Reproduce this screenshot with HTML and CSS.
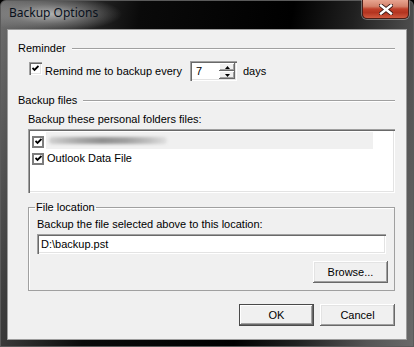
FILE: index.html
```html
<!DOCTYPE html>
<html>
<head>
<meta charset="utf-8">
<link rel="stylesheet" href="styles.css">
</head>
<body>
<div class="window">
  <div class="titlebar">
    <div class="title">Backup Options</div>
    <div class="close">
      <svg width="14" height="11" viewBox="0 0 14 11">
        <path d="M2 1.5 L12 9.5 M12 1.5 L2 9.5" stroke="#3a1a16" stroke-width="4.2" stroke-linecap="square"/>
        <path d="M2 1.5 L12 9.5 M12 1.5 L2 9.5" stroke="#ffffff" stroke-width="2.4" stroke-linecap="square"/>
      </svg>
    </div>
  </div>
  <div class="client">
    <div class="section-head"><span class="section-title">Reminder</span><span class="rule"></span></div>
    <div class="remind-row">
      <span class="check">
        <svg width="7" height="7" viewBox="0 0 7 7"><path d="M0.5 3 L2.5 5 L6.5 1" stroke="#000" stroke-width="1.8" fill="none"/></svg>
      </span>
      <span class="remind-label">Remind me to backup every</span>
      <div class="spin">
        <span class="spin-val">7</span>
        <div class="spin-btns">
          <div class="spin-btn"><svg width="5" height="3" viewBox="0 0 5 3"><path d="M2.5 0 L5 3 L0 3Z" fill="#000"/></svg></div>
          <div class="spin-btn"><svg width="5" height="3" viewBox="0 0 5 3"><path d="M0 0 L5 0 L2.5 3Z" fill="#000"/></svg></div>
        </div>
      </div>
      <span class="days">days</span>
    </div>
    <div class="section-head second"><span class="section-title">Backup files</span><span class="rule"></span></div>
    <div class="sub-label">Backup these personal folders files:</div>
    <div class="listbox">
      <div class="item">
        <span class="lcheck"><svg width="7" height="7" viewBox="0 0 7 7"><path d="M0.5 3 L2.5 5 L6.5 1" stroke="#000" stroke-width="1.8" fill="none"/></svg></span>
        <span class="item-text selected"><span class="smear"></span></span>
      </div>
      <div class="item">
        <span class="lcheck"><svg width="7" height="7" viewBox="0 0 7 7"><path d="M0.5 3 L2.5 5 L6.5 1" stroke="#000" stroke-width="1.8" fill="none"/></svg></span>
        <span class="item-text">Outlook Data File</span>
      </div>
    </div>
    <fieldset class="group">
      <legend>File location</legend>
      <div class="group-label">Backup the file selected above to this location:</div>
      <div class="textbox">D:\backup.pst</div>
      <div class="group-actions"><button class="btn">Browse...</button></div>
    </fieldset>
    <div class="dialog-actions">
      <button class="btn default">OK</button>
      <button class="btn">Cancel</button>
    </div>
  </div>
</div>
</body>
</html>
```

FILE: styles.css
```css
html, body {
  margin: 0;
  padding: 0;
  background: #000;
}

.window {
  width: 414px;
  height: 347px;
  box-sizing: border-box;
  display: flex;
  flex-direction: column;
  border-radius: 6px 6px 0 0;
  overflow: hidden;
  background:
    radial-gradient(ellipse 72px 18px at 50px 14px, rgba(185,185,185,0.95), rgba(150,150,150,0.5) 55%, rgba(120,120,120,0) 100%),
    linear-gradient(100deg, #707070 0%, #3c3c3c 12%, #0a0a0a 30%, #000 62%, #202020 75%, #555 90%, #6a6a6a 100%);
  box-shadow: inset 0 0 0 1px #5a5a5a;
}

.titlebar {
  height: 29px;
  display: flex;
  align-items: flex-start;
  padding-left: 9px;
  flex-shrink: 0;
}

.title {
  font-family: "Noto Sans", sans-serif;
  font-size: 12px;
  color: #08101c;
  margin-top: 5px;
  line-height: 16px;
}

.close {
  margin-left: auto;
  margin-right: 5px;
  width: 47px;
  height: 19px;
  box-sizing: border-box;
  border: 1px solid #4a1d16;
  border-top: none;
  border-radius: 0 0 5px 5px;
  background: linear-gradient(#e7a591 0%, #d4826b 35%, #c0402a 50%, #b33420 70%, #d05a40 100%);
  box-shadow: 0 0 0 1px rgba(200,200,200,0.45);
  display: flex;
  align-items: center;
  justify-content: center;
}

.client {
  flex: 1;
  margin: 0 7px 7px 7px;
  border: 1px solid #9c9c9c;
  background: #f0f0f0;
  padding: 12px 11px 0 10px;
  font-family: "Liberation Sans", Arial, sans-serif;
  font-size: 11px;
  line-height: 13px;
  color: #000;
}

.section-head {
  display: flex;
  align-items: center;
  height: 13px;
}

.section-head.second {
  margin-top: 13px;
}

.section-title {
  margin-right: 6px;
}

.rule {
  flex: 1;
  height: 1px;
  background: #a0a0a0;
  border-bottom: 1px solid #fff;
  margin-top: 1px;
}

.remind-row {
  display: flex;
  align-items: center;
  height: 20px;
  margin-top: 6px;
  padding-left: 11px;
}

.check {
  width: 13px;
  height: 13px;
  box-sizing: border-box;
  background: #fff;
  box-shadow: inset 1px 1px #a0a0a0, inset 2px 2px #696969, inset -1px -1px #fff, inset -2px -2px #e3e3e3;
  display: flex;
  align-items: center;
  justify-content: center;
  margin-top: -5px;
  flex-shrink: 0;
}

.remind-label {
  margin-left: 3px;
  width: 145px;
}

.spin {
  width: 47px;
  height: 20px;
  box-sizing: border-box;
  background: #fff;
  box-shadow: inset 1px 1px #a0a0a0, inset 2px 2px #696969, inset -1px -1px #fff, inset -2px -2px #e3e3e3;
  display: flex;
  align-items: center;
  padding: 2px 2px 2px 6px;
}

.spin-val {
  flex: 1;
}

.spin-btns {
  display: flex;
  flex-direction: column;
  width: 16px;
  height: 16px;
}

.spin-btn {
  flex: 1;
  background: #f0f0f0;
  box-shadow: inset -1px -1px #696969, inset 1px 1px #fff, inset -2px -2px #a0a0a0;
  display: flex;
  align-items: center;
  justify-content: center;
}

.days {
  margin-left: 6px;
}

.sub-label {
  margin-top: 6px;
  margin-left: 10px;
}

.listbox {
  margin-top: 3px;
  margin-left: 10px;
  height: 64px;
  box-sizing: border-box;
  background: #fff;
  box-shadow: inset 1px 1px #a0a0a0, inset 2px 2px #696969, inset -1px -1px #fff, inset -2px -2px #e3e3e3;
  padding: 4px 22px 0 4px;
}

.item {
  display: flex;
  align-items: center;
  height: 17px;
}

.lcheck {
  width: 12px;
  height: 12px;
  box-sizing: border-box;
  border: 2px solid #7c7c7c;
  background: #fff;
  display: flex;
  align-items: center;
  justify-content: center;
  flex-shrink: 0;
}

.item-text {
  margin-left: 3px;
  height: 17px;
  display: flex;
  align-items: center;
}

.item-text.selected {
  flex: 1;
  background: #f0f0f0;
  margin-left: 2px;
  height: 17px;
  margin-top: -3px;
  overflow: hidden;
}

.smear {
  display: block;
  width: 118px;
  height: 7px;
  margin-left: 3px;
  background: linear-gradient(90deg, #d0d0d0, #a8a8a8 25%, #909090 45%, #a0a0a0 65%, #c0c0c0 85%, #e0e0e0);
  filter: blur(1.8px);
  border-radius: 4px;
}

.group {
  margin: 8px 0 0 10px;
  padding: 4px 6px 7px 8px;
  border: 1px solid #a0a0a0;
  box-shadow: inset 1px 1px #fff;
  min-width: 0;
}

.group legend {
  padding: 0 1px;
  margin-left: -2px;
}

.textbox {
  margin-top: 3px;
  height: 20px;
  box-sizing: border-box;
  background: #fff;
  box-shadow: inset 1px 1px #a0a0a0, inset 2px 2px #696969, inset -1px -1px #fff, inset -2px -2px #e3e3e3;
  padding: 4px 3px 0 4px;
  margin-right: 2px;
}

.group-actions {
  display: flex;
  justify-content: flex-end;
  margin-top: 7px;
}

.btn {
  width: 75px;
  height: 22px;
  border: none;
  padding: 0;
  background: #f0f0f0;
  font-family: "Liberation Sans", Arial, sans-serif;
  font-size: 11px;
  color: #000;
  box-shadow: inset -1px -1px #696969, inset 1px 1px #fff, inset -2px -2px #a0a0a0, inset 2px 2px #e3e3e3;
}

.btn.default {
  box-shadow: inset 0 0 0 1px #4a4a4a, inset -2px -2px #696969, inset 2px 2px #fff, inset -3px -3px #a0a0a0;
}

.dialog-actions {
  display: flex;
  justify-content: flex-end;
  gap: 6px;
  margin-top: 13px;
}
```
